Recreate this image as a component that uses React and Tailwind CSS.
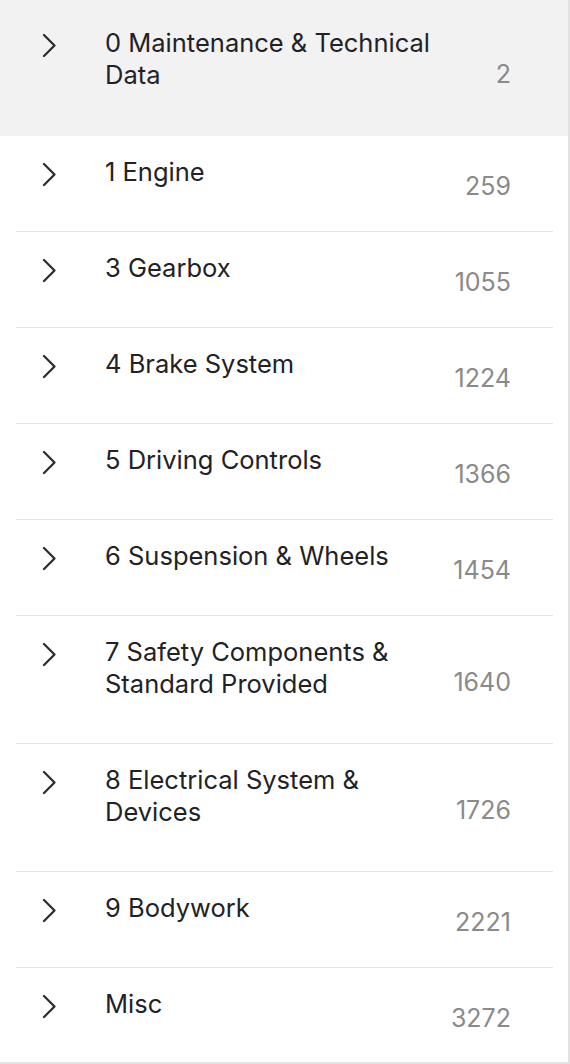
import React from "react";

const items = [
  { title: "0 Maintenance & Technical Data", count: "2" },
  { title: "1 Engine", count: "259" },
  { title: "3 Gearbox", count: "1055" },
  { title: "4 Brake System", count: "1224" },
  { title: "5 Driving Controls", count: "1366" },
  { title: "6 Suspension & Wheels", count: "1454" },
  { title: "7 Safety Components & Standard Provided", count: "1640" },
  { title: "8 Electrical System & Devices", count: "1726" },
  { title: "9 Bodywork", count: "2221" },
  { title: "Misc", count: "3272" },
];

function Chevron() {
  return (
    <svg width="14" height="26" viewBox="0 0 14 26" fill="none" className="block">
      <path d="M2 2 L12.5 12.5 L2 23" stroke="#2a2a2a" strokeWidth="2.2" strokeLinecap="round" strokeLinejoin="round" />
    </svg>
  );
}

export default function App() {
  return (
    <div
      className="w-[570px] h-[1064px] bg-white border-r-2 border-b-2 border-[#e2e2e2] overflow-hidden"
      style={{ fontFamily: "Inter, 'Noto Sans', sans-serif" }}
    >
      {items.map((it, i) => {
        const first = i === 0;
        const last = i === items.length - 1;
        return (
          <div key={i} className={first ? "bg-[#f2f2f2]" : "bg-white"}>
            <div
              className={
                "ml-4 mr-[15px] flex items-center" +
                (first || last ? "" : " border-b border-[#e4e4e4]")
              }
            >
              <div className={"flex items-start " + (first ? "pt-[27px] pb-[45px]" : "pt-5 pb-[43px]")}>
                <div className="w-[89px] pl-[26px] pt-[6px]">
                  <Chevron />
                </div>
                <div className="w-[345px] text-[25.5px] leading-8 text-[#222226]">
                  {it.title}
                </div>
              </div>
              <div
                className={
                  "flex-1 text-right pr-[42px] text-[25px] leading-8 text-[#8a8a8a] " +
                  (first ? "translate-y-[6px]" : "translate-y-[2px]")
                }
              >
                {it.count}
              </div>
            </div>
          </div>
        );
      })}
    </div>
  );
}
